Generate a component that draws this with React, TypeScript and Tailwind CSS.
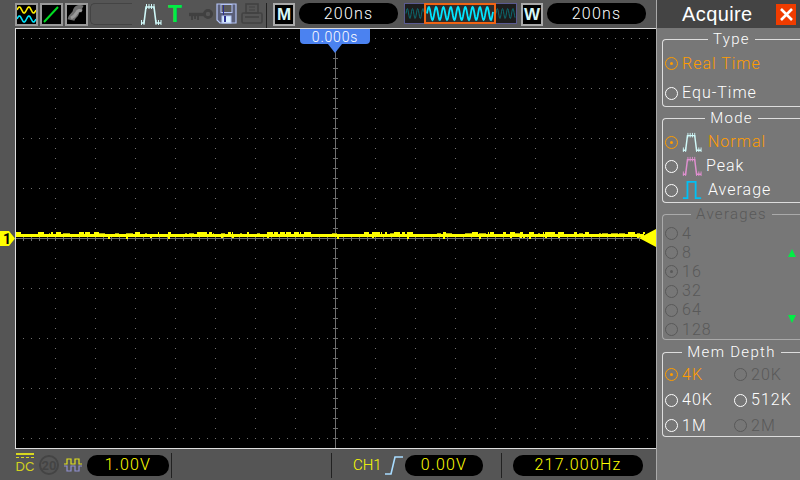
import React from "react";

const mono = "font-['Roboto','Liberation_Sans',sans-serif]";

function Pill({ w, children, cls }: { w: string; children: React.ReactNode; cls: string }) {
  return (
    <div className={`flex h-[21px] items-center justify-center rounded-[10px] bg-black text-[16px] font-light leading-none tracking-[1.2px] ${w} ${cls}`}>
      {children}
    </div>
  );
}

function Sq({ c, children }: { c?: string; children: React.ReactNode }) {
  return (
    <div className={`h-[23px] w-[23px] shrink-0 border-2 border-[#999] bg-black ${c ?? ""}`}>{children}</div>
  );
}

const Sep = ({ c }: { c?: string }) => <div className={`h-[25px] w-px shrink-0 bg-[#222] ${c ?? ""}`} />;

function Radio({ on, tone }: { on?: boolean; tone: string }) {
  return (
    <span className={`relative mr-[4px] inline-block h-[13px] w-[13px] shrink-0 rounded-full border ${tone}`}>
      {on && <span className="absolute left-[4px] top-[4px] h-[3px] w-[3px] rounded-full bg-current" />}
    </span>
  );
}

function Row({ label, on, tone = "white", h, icon, gap }: { label: string; on?: boolean; tone?: "white" | "orange" | "dim"; h: string; icon?: React.ReactNode; gap?: string }) {
  const t = tone === "orange" ? "text-[#ff9c00] border-[#ff9c00]" : tone === "dim" ? "text-[#595959] border-[#595959]" : "text-white border-white";
  return (
    <div className={`flex items-center pl-[2px] text-[16px] font-light leading-none tracking-[1px] ${h} ${t}`}>
      <Radio on={on} tone={t} />
      {icon}
      <span className={gap ?? ""}>{label}</span>
    </div>
  );
}

function Group({ title, dim, h, mt, children }: { title: string; dim?: boolean; h: string; mt: string; children: React.ReactNode }) {
  return (
    <fieldset className={`ml-[5px] rounded-tl-[4px] rounded-bl-[4px] border border-r-0 ${dim ? "border-[#aaa]" : "border-[#ddd]"} ${h} ${mt}`}>
      <legend className={`mx-auto px-[5px] text-center text-[15px] font-light leading-[16px] tracking-[1.3px] ${dim ? "text-[#595959]" : "text-white"}`}>{title}</legend>
      {children}
    </fieldset>
  );
}

const Wave = ({ x0, x1, y0, amp, per, stroke, sw }: { x0: number; x1: number; y0: number; amp: number; per: number; stroke: string; sw: number }) => {
  let d = "";
  for (let x = x0; x <= x1; x += 0.5) {
    const y = y0 - amp * Math.sin(((x - x0) / per) * Math.PI * 2);
    d += `${d ? "L" : "M"}${x} ${y.toFixed(2)}`;
  }
  return <path d={d} fill="none" stroke={stroke} strokeWidth={sw} />;
};

const PulseIcon = ({ color, w = 22, h = 22, className }: { color: string; w?: number; h?: number; className?: string }) => (
  <svg width={w} height={h} viewBox="0 0 22 22" className={className} fill="none" stroke={color}>
    <path d="M1 20 H4 L6 4 H14 L16 20 H21" strokeWidth="1.6" />
    <path d="M6.5 1v5M9 1v5M11.5 1v5M14 1v5M1.5 17v5M4 17v5M16 17v5M18.5 17v5M21 17v5" strokeWidth="1" />
  </svg>
);

function Plot() {
  const els: React.ReactNode[] = [];
  const dot = "#6e6e6e";
  for (let y = 38; y <= 438; y += 50) {
    if (y === 238) continue;
    for (let x = 23; x < 655; x += 8) els.push(<rect key={`h${x}-${y}`} x={x} y={y} width="1" height="1" fill={dot} />);
  }
  for (let x = 55; x < 655; x += 40) {
    if (x === 335) continue;
    for (let y = 48; y < 440; y += 10) els.push(<rect key={`v${x}-${y}`} x={x} y={y} width="1" height="1" fill={dot} />);
  }
  const ax = "#6e6e6e";
  els.push(<rect key="ax1" x="16" y="238" width="640" height="1" fill={ax} />);
  els.push(<rect key="ax2" x="335" y="29" width="1" height="419" fill={ax} />);
  for (let x = 23; x < 655; x += 8) els.push(<rect key={`tx${x}`} x={x} y="236" width="1" height="5" fill={ax} />);
  for (let y = 38; y < 445; y += 10) els.push(<rect key={`ty${y}`} x="333" y={y} width="5" height="1" fill={ax} />);
  // trace
  els.push(<rect key="band" x="16" y="234" width="628" height="3" fill="#ffff00" />);
  let s = 12345;
  const rnd = () => {
    s = (s * 1103515245 + 12345) & 0x7fffffff;
    return s / 0x7fffffff;
  };
  let x = 16;
  while (x < 644) {
    const w = 1 + Math.floor(rnd() * 7);
    const r = rnd();
    if (r < 0.45) els.push(<rect key={`n${x}`} x={x} y={232} width={w} height="2" fill="#ffff00" />);
    else if (r < 0.65) els.push(<rect key={`d${x}`} x={x} y={233} width={w} height="1" fill="#a8a810" />);
    const q = rnd();
    if (q < 0.16) els.push(<rect key={`m${x}`} x={x} y={237} width="2" height={q < 0.05 ? 2 : 1} fill="#ffff00" />);
    x += w + Math.floor(rnd() * 4);
  }
  return (
    <svg width="640" height="419" viewBox="16 29 640 419" className="block">
      {els}
    </svg>
  );
}

export default function App() {
  return (
    <div className={`flex h-[480px] w-[800px] overflow-hidden bg-[#555] ${mono}`}>
      <div className="flex h-full w-[656px] shrink-0 flex-col">
        {/* top bar */}
        <div className="flex h-[28px] shrink-0 items-start pl-[15px] pt-[3px]">
          <Sq>
            <svg width="19" height="19" viewBox="0 0 19 19" fill="none">
              <Wave x0={0} x1={19} y0={5} amp={3} per={9.5} stroke="#ffee00" sw={1.6} />
              <Wave x0={0} x1={19} y0={14} amp={3} per={9.5} stroke="#00e6ff" sw={1.6} />
            </svg>
          </Sq>
          <Sq c="ml-[2px]">
            <svg width="19" height="19" viewBox="0 0 19 19"><path d="M2 17L16 2" stroke="#00dd22" strokeWidth="2" /></svg>
          </Sq>
          <Sq c="ml-[2px]">
            <svg width="19" height="19" viewBox="0 0 19 19" fill="none">
              <path d="M4 15C5 10 8 11 9 7S13 3 15 4" stroke="#6f6f6f" strokeWidth="7" />
              <path d="M4 13C6 12 8 11 9.5 8S13 5 15 6" stroke="#9a9a9a" strokeWidth="3" />
            </svg>
          </Sq>
          <div className="ml-[2px] h-[22px] w-[42px] shrink-0 rounded-l-[5px] border-b border-l border-t border-[#444]" />
          <PulseIcon color="#d0f8f8" className="ml-[8px] shrink-0" w={22} h={22} />
          <div className="ml-[6px] w-[14px] shrink-0 font-['Liberation_Sans',sans-serif] text-[23px] font-bold leading-[22px] text-[#00ee44]">T</div>
          <svg width="24" height="22" viewBox="0 0 24 22" fill="none" className="ml-[7px] shrink-0">
            <circle cx="19" cy="11" r="3.6" stroke="#404040" strokeWidth="2.8" />
            <path d="M0 11.5H15" stroke="#404040" strokeWidth="3.4" />
            <path d="M3 12v5M6 12v4M9 12v5" stroke="#404040" strokeWidth="1.8" />
          </svg>
          <svg width="21" height="21" viewBox="0 0 21 21" className="ml-[3px] shrink-0">
            <path d="M1 1H20V20H4L1 17Z" fill="#5a5f78" stroke="#b4c4f5" strokeWidth="1.2" />
            <rect x="5" y="1.5" width="11" height="8" fill="#5a5a5a" stroke="#b4c4f5" />
            <rect x="6" y="13" width="9" height="7" fill="#d8f0ff" stroke="#b4c4f5" />
            <rect x="8" y="13" width="2" height="6" fill="#2b2f90" />
            <rect x="7" y="2" width="1" height="10" fill="#2b2f90" />
          </svg>
          <svg width="22" height="22" viewBox="0 0 22 22" fill="none" stroke="#424242" strokeWidth="1.6" className="ml-[4px] shrink-0">
            <rect x="5" y="1" width="12" height="9" />
            <path d="M8 4h6M8 7h6" strokeWidth="1" />
            <rect x="1" y="10" width="20" height="10" rx="1.5" />
            <path d="M4 14h14" />
          </svg>
          <Sep c="ml-[3px]" />
          <div className="ml-[6px] flex h-[23px] w-[22px] shrink-0 items-center justify-center border-2 border-[#aaa] bg-black font-['Liberation_Sans',sans-serif] text-[17px] font-bold leading-none text-[#d6f7f7]">M</div>
          <Pill w="w-[99px] ml-[4px] shrink-0" cls="text-white">200ns</Pill>
          <svg width="113" height="21" viewBox="0 0 113 21" className="ml-[6px] shrink-0">
            <rect x="0.5" y="0.5" width="112" height="20" fill="#1c1c1c" stroke="#5a5a90" />
            <Wave x0={2} x1={20} y0={10.5} amp={5} per={5.2} stroke="#0b6a70" sw={1} />
            <Wave x0={92} x1={111} y0={10.5} amp={5} per={5.2} stroke="#0b6a70" sw={1} />
            <rect x="21" y="1" width="70" height="19" fill="#2b2b2b" stroke="#f06414" strokeWidth="2" />
            <Wave x0={23} x1={89} y0={10.5} amp={6.5} per={7.3} stroke="#00e6ff" sw={1.8} />
          </svg>
          <div className="ml-[4px] flex h-[23px] w-[22px] shrink-0 items-center justify-center border-2 border-[#aaa] bg-black font-['Liberation_Sans',sans-serif] text-[17px] font-bold leading-none text-[#d6f7f7]">W</div>
          <Pill w="w-[99px] ml-[4px] shrink-0" cls="text-white">200ns</Pill>
        </div>
        {/* plot */}
        <div className="relative ml-[15px] h-[421px] shrink-0 border-b border-l border-t border-[#ddd] bg-black">
          <Plot />
          <div className="absolute left-[284px] top-0 flex h-[15px] w-[70px] items-center justify-center rounded-b-[4px] bg-[#4b82f0] text-[14px] font-light leading-none tracking-[0.8px] text-white">0.000s</div>
          <svg width="14" height="9" viewBox="0 0 14 9" className="absolute left-[312px] top-[15px]"><path d="M0 0H14L7 9Z" fill="#4b82f0" /></svg>
          <svg width="17" height="18" viewBox="0 0 17 18" className="absolute right-0 top-[200px]"><path d="M0 9L17 0V18Z" fill="#ffff00" /></svg>
        </div>
        {/* bottom bar */}
        <div className="flex min-h-0 flex-1 items-center pl-[16px] pt-[1px]">
          <div className="flex h-[24px] w-[18px] shrink-0 flex-col items-center">
            <div className="h-[2px] w-full bg-[#d8d820]" />
            <div className="mt-[2px] h-px w-full border-t border-dashed border-[#d8d820]" />
            <span className="mt-[2px] font-['Liberation_Sans',sans-serif] text-[13px] leading-[14px] text-[#d0d020]">DC</span>
          </div>
          <div className="ml-[5px] flex h-[20px] w-[20px] shrink-0 items-center justify-center rounded-full border-2 border-[#444] text-[13px] font-bold leading-none text-[#444]">20</div>
          <svg width="18" height="16" viewBox="0 0 18 16" className="ml-[5px] shrink-0" fill="none">
            <path d="M0 7H3V2H7V7H11V2H15V7H18" stroke="#e0e020" strokeWidth="1.2" />
            <path d="M0 9H3V14H7V9H11V14H15V9H18" stroke="#8f8fd0" strokeWidth="1.2" />
          </svg>
          <Pill w="w-[82px] ml-[5px] shrink-0" cls="text-[#ffff00]">1.00V</Pill>
          <Sep c="ml-[2px]" />
          <Sep c="ml-[159px]" />
          <div className="ml-[21px] w-[32px] shrink-0 text-[15px] font-light leading-none text-[#ffff00]">CH1</div>
          <svg width="18" height="20" viewBox="0 0 18 20" className="shrink-0" fill="none" stroke="#a8dcff" strokeWidth="1.6">
            <path d="M0 19H6L10 2H18" />
          </svg>
          <Pill w="w-[78px] ml-[2px] shrink-0" cls="text-[#ffff00]">0.00V</Pill>
          <Sep c="ml-[18px]" />
          <Pill w="w-[130px] ml-[11px] shrink-0" cls="text-[#ffff00]">217.000Hz</Pill>
        </div>
      </div>
      {/* right panel */}
      <div className="flex h-full w-[144px] shrink-0 flex-col border-l border-[#aaa] bg-[#777]">
        <div className="flex h-[28px] shrink-0 items-center bg-[#444] pl-[25px]">
          <span className="w-[94px] font-['Liberation_Sans',sans-serif] text-[20px] leading-none tracking-[0.4px] text-white">Acquire</span>
          <span className="flex h-[21px] w-[20px] items-center justify-center bg-[#f03c00]">
            <svg width="15" height="15" viewBox="0 0 15 15"><path d="M2 2L13 13M13 2L2 13" stroke="#fff" strokeWidth="2.6" /></svg>
          </span>
        </div>
        <Group title="Type" h="h-[76px]" mt="mt-[3px]">
          <Row label="Real Time" tone="orange" on h="h-[27px] mt-[3px]" />
          <Row label="Equ-Time" h="h-[30px] mt-[1px]" />
        </Group>
        <Group title="Mode" h="h-[93px]" mt="mt-[3px]">
          <Row label="Normal" tone="orange" on h="h-[24px] mt-[4px]" gap="ml-[6px]" icon={<PulseIcon color="#d0f8f8" w={20} h={20} />} />
          <Row label="Peak" h="h-[24px]" gap="ml-[4px]" icon={<PulseIcon color="#e090d0" w={20} h={20} />} />
          <Row label="Average" h="h-[24px]" gap="ml-[6px]" icon={
            <svg width="20" height="20" viewBox="0 0 22 22" fill="none"><path d="M1 20H6V2H15V20H21" stroke="#00c0f5" strokeWidth="2" /></svg>
          } />
        </Group>
        <Group title="Averages" dim h="h-[134px]" mt="mt-[3px]">
          <div className="relative mt-[2px]">
            {["4", "8", "16", "32", "64", "128"].map((t) => (
              <Row key={t} label={t} tone="dim" on={t === "16"} h="h-[19.2px]" />
            ))}
            <svg width="8" height="8" viewBox="0 0 8 8" className="absolute left-[125px] top-[25px]"><path d="M4 0L8 8H0Z" fill="#00ee44" /></svg>
            <svg width="8" height="8" viewBox="0 0 8 8" className="absolute left-[125px] top-[91px]"><path d="M0 0H8L4 8Z" fill="#00ee44" /></svg>
          </div>
        </Group>
        <Group title="Mem Depth" h="h-[93px]" mt="mt-[4px]">
          <div className="mt-[2px] grid grid-cols-[69px_1fr]">
            <Row label="4K" tone="orange" on h="h-[25.5px]" />
            <Row label="20K" tone="dim" h="h-[25.5px]" />
            <Row label="40K" h="h-[25.5px]" />
            <Row label="512K" h="h-[25.5px]" />
            <Row label="1M" h="h-[25.5px]" />
            <Row label="2M" tone="dim" h="h-[25.5px]" />
          </div>
        </Group>
      </div>
      {/* channel marker */}
      <div className="absolute left-0 top-[231px] flex h-[15px] w-[15px] items-center pl-[3px] text-[14px] font-bold leading-none text-black [clip-path:polygon(0_0,60%_0,100%_50%,60%_100%,0_100%)] bg-[#ffff00]">1</div>
    </div>
  );
}
